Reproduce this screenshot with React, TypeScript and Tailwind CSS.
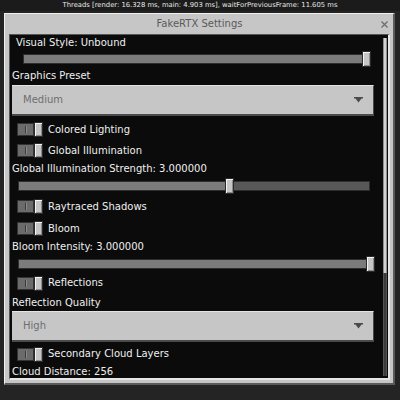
import React from "react";

const FONT = { fontFamily: '"DejaVu Sans", sans-serif' };

function Label({ text, h, pl = 2 }: { text: string; h: number; pl?: number }) {
  return (
    <div className="flex items-center text-[10px] text-[#efefef] leading-none" style={{ height: h, paddingLeft: pl }}>
      {text}
    </div>
  );
}

function Slider({ h, left, width, frac }: { h: number; left: number; width: number; frac: number }) {
  const fill = Math.round(width * frac);
  return (
    <div className="flex items-center" style={{ height: h, paddingLeft: left }}>
      <div className="relative flex h-[10px] border border-[#2e2e2e]" style={{ width }}>
        <div className="h-full bg-[#7b7b7b]" style={{ width: fill }} />
        <div className="h-full flex-1 bg-[#585858]" />
        {/* handle */}
        <div
          className="absolute top-[-4px] w-[9px] h-[16px] bg-[#c6c6c6] border border-[#2a2a2a] shadow-[inset_1px_1px_0_#f4f4f4,inset_-1px_-1px_0_#8b8b8b]"
          style={{ left: fill - 5 }}
        />
      </div>
    </div>
  );
}

function Toggle({ text, h }: { text: string; h: number }) {
  return (
    <div className="flex items-center pl-[7px]" style={{ height: h }}>
      <div className="flex items-center">
        <div className="w-[17px] h-[13px] bg-[#6b6b6b] border border-[#333] flex items-center justify-center">
          <div className="w-[1px] h-[7px] bg-[#3a3a3a]" />
          <div className="w-[1px] h-[7px] bg-[#8a8a8a]" />
        </div>
        <div className="w-[9px] h-[15px] bg-[#c6c6c6] border border-[#2a2a2a] shadow-[inset_1px_1px_0_#f4f4f4,inset_-1px_-1px_0_#8b8b8b]" />
      </div>
      <span className="ml-[5px] text-[10px] text-[#efefef] leading-none">{text}</span>
    </div>
  );
}

function Dropdown({ value, h }: { value: string; h: number }) {
  return (
    <div className="pl-[2px]">
      <div
        className="w-[362px] flex items-center justify-between pl-[11px] pr-[10px] bg-[#c6c6c6] border-t border-t-[#e4e4e4] border-b-2 border-b-[#4a4a4a] border-r border-r-[#4a4a4a]"
        style={{ height: h }}
      >
        <span className="text-[10px] text-[#6e6e6e] leading-none">{value}</span>
        <svg width="9" height="6" viewBox="0 0 9 6">
          <path d="M0 0h9v1.5H7.5L4.5 5.5 1.5 1.5H0z" fill="#4a4a4a" />
        </svg>
      </div>
    </div>
  );
}

export default function App() {
  return (
    <div className="w-[400px] h-[400px] bg-[#242424] overflow-hidden flex flex-col" style={FONT}>
      {/* debug line */}
      <div className="h-[13px] flex flex-col">
        <div className="h-[11px] bg-[#1b1b1b] flex items-center justify-center text-[6.8px] text-[#e8e8e8] leading-none">
          Threads [render: 16.328 ms, main: 4.903 ms], waitForPreviousFrame: 11.605 ms
        </div>
      </div>

      {/* panel */}
      <div className="ml-[4px] w-[391px] h-[372px] flex flex-col bg-[#c6c6c6] border-t border-l border-t-[#f0f0f0] border-l-[#f0f0f0] border-r-2 border-b-2 border-r-[#5a5a5a] border-b-[#5a5a5a] pl-[4px] pr-[3px] pb-[3px]">
        <div className="h-[20px] grid grid-cols-[1fr_auto_1fr] items-center">
          <div />
          <span className="text-[10px] text-[#5a5a5a] leading-none">FakeRTX Settings</span>
          <div className="flex justify-end pr-[2px]">
            <svg width="7" height="7" viewBox="0 0 7 7">
              <path d="M0.5 0.5l6 6M6.5 0.5l-6 6" stroke="#6a6a6a" strokeWidth="1.2" />
            </svg>
          </div>
        </div>

        {/* content */}
        <div className="flex-1 flex bg-[#0b0b0b] border-t border-l border-t-[#555] border-l-[#555] border-r-2 border-b-2 border-r-[#e6e6e6] border-b-[#e6e6e6] overflow-hidden">
          <div className="w-[371px] flex flex-col overflow-hidden">
            <Label text="Visual Style: Unbound" h={16} pl={6} />
            <Slider h={16} left={13} width={343} frac={1} />
            <Label text="Graphics Preset" h={18} />
            <Dropdown value="Medium" h={31} />
            <div className="h-[3px]" />
            <Toggle text="Colored Lighting" h={21} />
            <Toggle text="Global Illumination" h={21} />
            <Label text="Global Illumination Strength: 3.000000" h={16} />
            <Slider h={17} left={8} width={352} frac={0.6} />
            <Toggle text="Raytraced Shadows" h={25} />
            <Toggle text="Bloom" h={19} />
            <Label text="Bloom Intensity: 3.000000" h={18} />
            <Slider h={15} left={8} width={352} frac={1} />
            <Toggle text="Reflections" h={24} />
            <Label text="Reflection Quality" h={16} />
            <Dropdown value="High" h={31} />
            <Toggle text="Secondary Cloud Layers" h={24} />
            <Label text="Cloud Distance: 256" h={12} />
          </div>

          {/* scrollbar */}
          <div className="flex-1 flex flex-col pl-[2px] pt-[3px] pb-[2px]">
            <div className="w-[4px] h-[235px] bg-[#d2d2d2] border-x border-[#8e8e8e]" />
            <div className="w-[4px] flex-1 bg-[#3c3c3c] border-x border-[#555]" />
          </div>
        </div>
      </div>
    </div>
  );
}
